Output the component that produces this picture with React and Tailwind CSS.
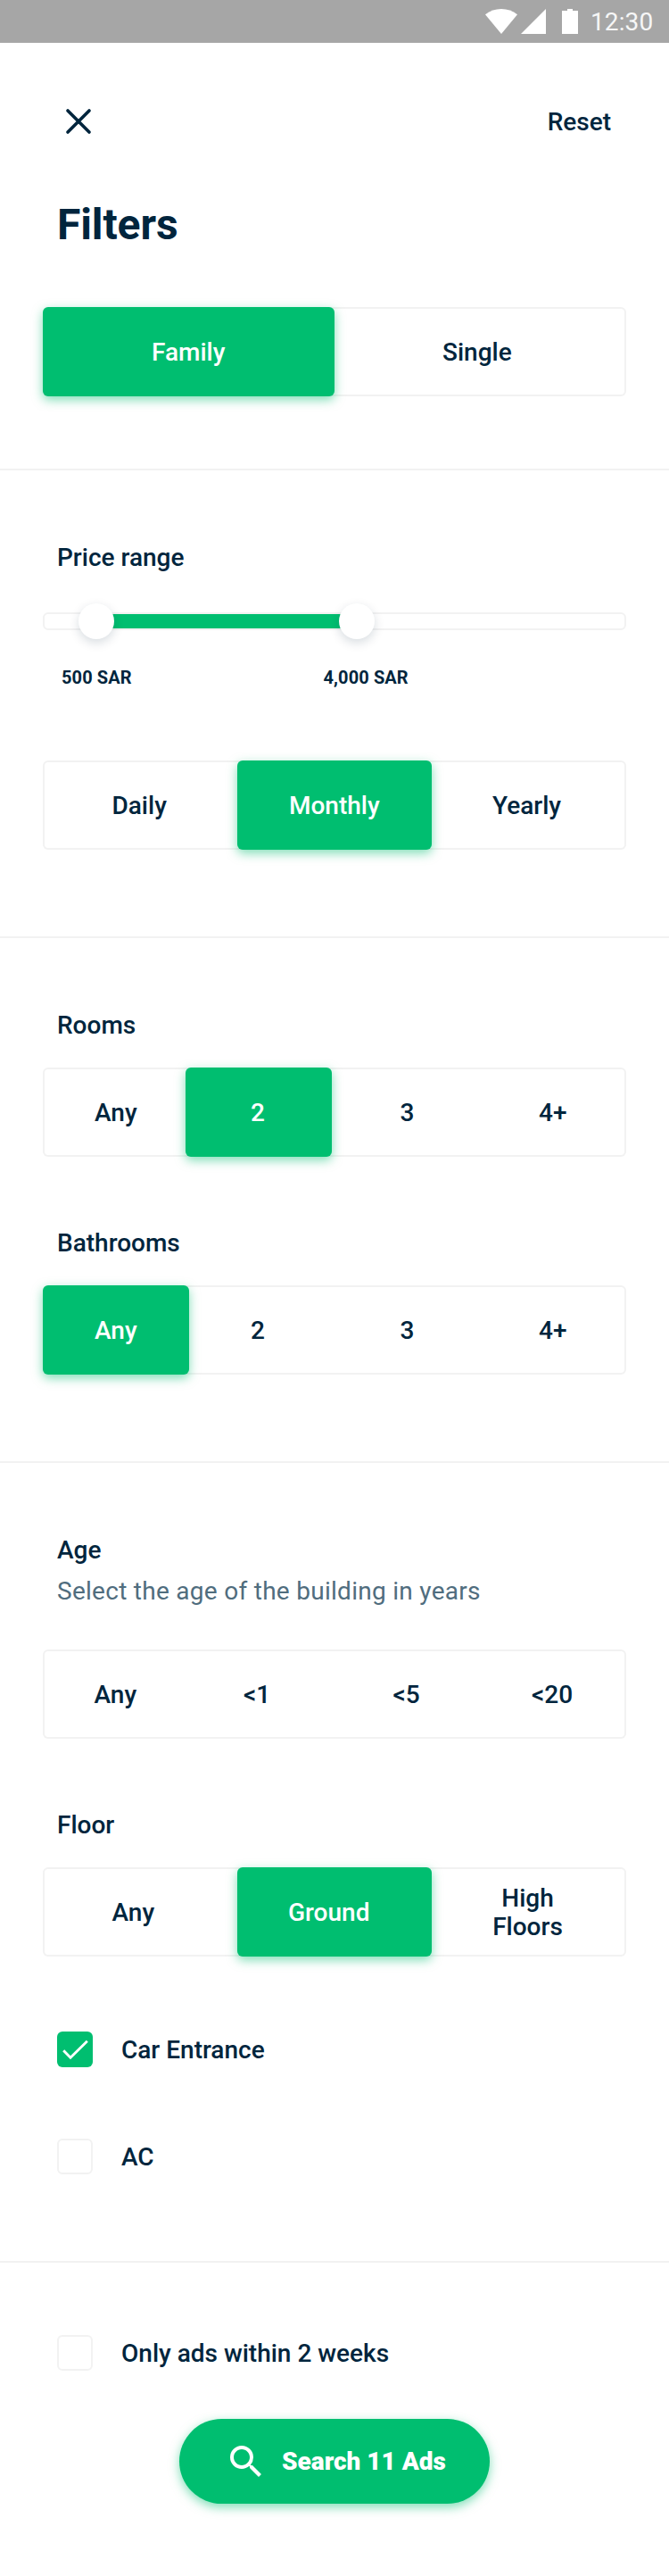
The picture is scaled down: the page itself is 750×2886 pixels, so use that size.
import { MdSearch } from "react-icons/md";

function StatusBar() {
  return (
    <div className="flex h-12 items-center justify-end bg-[#a6a6a6] pr-[18px]">
      <svg className="h-12 w-[110px]" viewBox="0 0 110 48" fill="#fff" aria-hidden="true">
        <path d="M20 38 2 16.2Q10 10 20 10T38 16.2Z" />
        <path d="M42 38H70V10Z" />
        <path d="M88 12H94V10H100V12H106V38H88Z" />
      </svg>
      <span className="ml-[10px] w-[70px] pt-[2px] text-[28px] leading-8 font-normal tracking-[0.1px] text-[#f6f6f6]">12:30</span>
    </div>
  );
}

function Divider({ className = "" }) {
  return <div className={`h-[2px] bg-[#f2f2f2] ${className}`} />;
}

function Segmented({ options, selected, className = "" }) {
  return (
    <div className={`mx-12 flex h-[100px] rounded-md shadow-[inset_0_0_0_2px_#f2f2f2] ${className}`}>
      {options.map(({ label, cell }, i) => (
        <button
          key={label}
          className={`flex shrink-0 items-center rounded-md pt-[2px] text-left whitespace-pre-line ${cell} ${
            i === selected ? "bg-[#00be70] text-white shadow-[0_4px_12px_rgba(0,190,112,0.5)]" : ""
          }`}
        >
          {label}
        </button>
      ))}
    </div>
  );
}

function Label({ children, className = "" }) {
  return <h2 className={`px-16 ${className}`}>{children}</h2>;
}

function Check({ checked, children, className = "" }) {
  return (
    <div className={`flex h-10 items-center gap-8 px-16 ${className}`}>
      {checked ? (
        <span className="size-10 rounded-md bg-[#00be70]">
          <svg className="size-10" viewBox="0 0 40 40" fill="none" stroke="#fff" strokeWidth="2.9" aria-hidden="true">
            <path d="M7.2 21.2 15 29.2 33.8 10.8" />
          </svg>
        </span>
      ) : (
        <span className="size-10 rounded-md border-2 border-[#f2f2f2]" />
      )}
      <span className="pt-[2px]">{children}</span>
    </div>
  );
}

function Slider({ className = "" }) {
  return (
    <div className={`relative mx-12 h-5 rounded-md border-2 border-[#f2f2f2] ${className}`}>
      <div className="absolute top-0 left-[58px] h-4 w-[292px] bg-[#00be70]" />
      <div className="absolute -top-3 left-[38px] size-10 rounded-full bg-white shadow-[0_4px_12px_rgba(0,37,60,0.16)]" />
      <div className="absolute -top-3 left-[330px] size-10 rounded-full bg-white shadow-[0_4px_12px_rgba(0,37,60,0.16)]" />
    </div>
  );
}

const tenants = [
  { label: "Family", cell: "w-[327px] pl-[122px]" },
  { label: "Single", cell: "w-[327px] pl-[121px]" },
];
const periods = [
  { label: "Daily", cell: "w-[218px] pl-[77.5px]" },
  { label: "Monthly", cell: "w-[218px] pl-[58px]" },
  { label: "Yearly", cell: "w-[218px] pl-[68px]" },
];
const rooms = [
  { label: "Any", cell: "w-[160px] pl-[58px]" },
  { label: "2", cell: "w-[163.5px] pl-[73px]" },
  { label: "3", cell: "w-[163.5px] pl-[77px]" },
  { label: "4+", cell: "w-[163.5px] pl-[69px]" },
];
const bathrooms = [
  { label: "Any", cell: "w-[163.5px] pl-[58px]" },
  { label: "2", cell: "w-[163.5px] pl-[69.5px]" },
  { label: "3", cell: "w-[163.5px] pl-[73.5px]" },
  { label: "4+", cell: "w-[163.5px] pl-[65.5px]" },
];
const ages = [
  { label: "Any", cell: "w-[163.5px] pl-[57.5px]" },
  { label: "<1", cell: "w-[163.5px] pl-[61.5px]" },
  { label: "<5", cell: "w-[163.5px] pl-[65.5px]" },
  { label: "<20", cell: "w-[163.5px] pl-[57.5px]" },
];
const floors = [
  { label: "Any", cell: "w-[218px] pl-[77.5px]" },
  { label: "Ground", cell: "w-[218px] pl-[57px]" },
  { label: "High\nFloors", cell: "w-[218px] justify-center pr-[3px] text-center!" },
];

export default function App() {
  return (
    <main className="h-[2886px] w-[750px] overflow-hidden bg-white font-[Roboto,sans-serif] text-[28px] leading-8 font-medium text-[#00253d]">
      <StatusBar />

      <header className="mt-[72px] flex h-8 items-center justify-between pr-[65px] pl-[72px]">
        <svg className="size-8" viewBox="0 0 32 32" stroke="currentColor" strokeWidth="3.7" strokeLinecap="round" aria-hidden="true">
          <path d="M4 4 28 28M28 4 4 28" />
        </svg>
        <button className="pt-[2px]">Reset</button>
      </header>
      <h1 className="mt-[72px] px-16 text-[48px] leading-[56px] font-bold tracking-[-0.1px]">Filters</h1>
      <Segmented className="mt-16" options={tenants} selected={0} />

      <Divider className="mt-[81px]" />

      <Label className="mt-[82px]">Price range</Label>
      <Slider className="mt-[45px]" />
      <div className="mt-[41px] flex pl-[69px] text-[20px] leading-6 font-bold tracking-[0.1px]">
        <span className="w-[293.5px]">500 SAR</span>
        <span>4,000 SAR</span>
      </div>
      <Segmented className="mt-[81px]" options={periods} selected={1} />

      <Divider className="mt-[97px]" />

      <Label className="mt-[82px]">Rooms</Label>
      <Segmented className="mt-[31px]" options={rooms} selected={1} />
      <Label className="mt-[81px]">Bathrooms</Label>
      <Segmented className="mt-[31px]" options={bathrooms} selected={0} />

      <Divider className="mt-[97px]" />

      <Label className="mt-[82px]">Age</Label>
      <p className="mt-[14px] px-16 font-normal tracking-[0.28px] text-[#506d7e]">
        Select the age of the building in years
      </p>
      <Segmented className="mt-[49px]" options={ages} selected={-1} />
      <Label className="mt-[81px]">Floor</Label>
      <Segmented className="mt-[31px]" options={floors} selected={1} />

      <Check className="mt-[84px]" checked>Car Entrance</Check>
      <Check className="mt-20">AC</Check>

      <Divider className="mt-[97px]" />

      <Check className="mt-[81px]">Only ads within 2 weeks</Check>

      <button className="mt-[54px] ml-[201px] flex h-[95px] w-[348px] items-center gap-4 rounded-full bg-[#00be70] pl-[51px] font-black text-white shadow-[0_4px_12px_rgba(0,190,112,0.5)]">
        <MdSearch className="size-12" />
        <span className="pt-px">Search 11 Ads</span>
      </button>
    </main>
  );
}
